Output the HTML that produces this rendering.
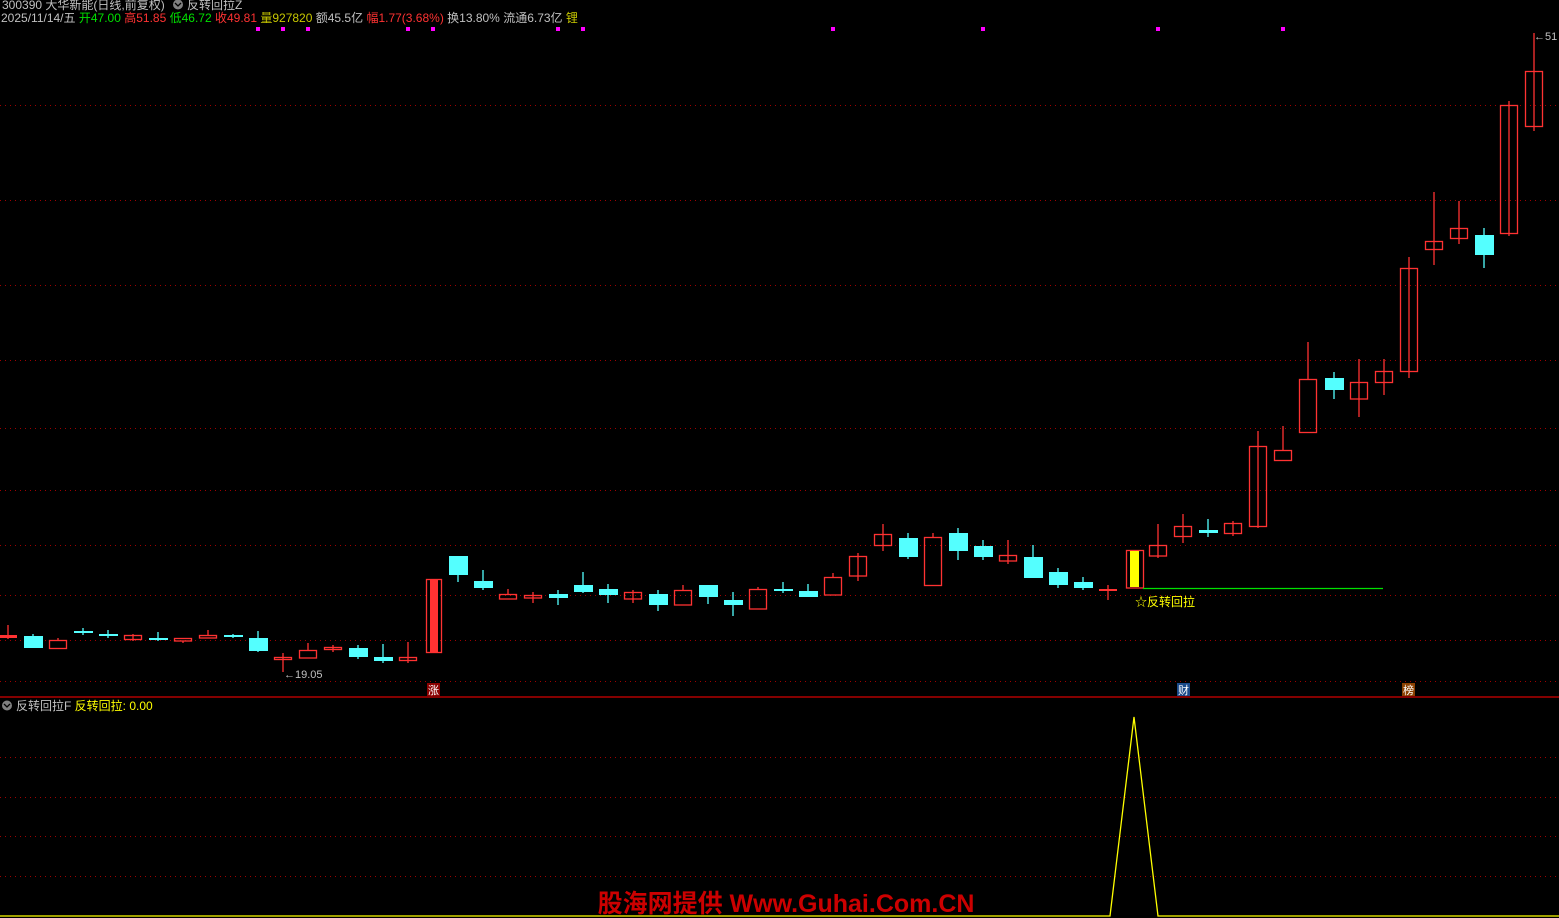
<!DOCTYPE html>
<html><head><meta charset="utf-8"><style>
html,body{margin:0;padding:0;background:#000;width:1559px;height:918px;overflow:hidden}
svg{display:block}
text{font-family:"Liberation Sans","Noto Sans CJK SC",sans-serif}
</style></head><body>
<svg width="1559" height="918" viewBox="0 0 1559 918" xmlns="http://www.w3.org/2000/svg">
<rect width="1559" height="918" fill="#000"/>
<g stroke="#a00000" stroke-width="1" stroke-dasharray="1 4">
<line x1="0" y1="105.5" x2="1559" y2="105.5"/><line x1="0" y1="200.5" x2="1559" y2="200.5"/>
<line x1="0" y1="285.5" x2="1559" y2="285.5"/><line x1="0" y1="360.5" x2="1559" y2="360.5"/>
<line x1="0" y1="428.5" x2="1559" y2="428.5"/><line x1="0" y1="490.5" x2="1559" y2="490.5"/>
<line x1="0" y1="545.5" x2="1559" y2="545.5"/><line x1="0" y1="595.5" x2="1559" y2="595.5"/>
<line x1="0" y1="640.5" x2="1559" y2="640.5"/><line x1="0" y1="681.5" x2="1559" y2="681.5"/>
<line x1="0" y1="757.5" x2="1559" y2="757.5"/><line x1="0" y1="797.5" x2="1559" y2="797.5"/>
<line x1="0" y1="836.5" x2="1559" y2="836.5"/><line x1="0" y1="876.5" x2="1559" y2="876.5"/>
</g>
<line x1="0" y1="697" x2="1559" y2="697" stroke="#b00000" stroke-width="1.5"/>
<g fill="#ff00ff">
<rect x="256" y="27" width="4" height="4"/><rect x="281" y="27" width="4" height="4"/><rect x="306" y="27" width="4" height="4"/>
<rect x="406" y="27" width="4" height="4"/><rect x="431" y="27" width="4" height="4"/><rect x="556" y="27" width="4" height="4"/>
<rect x="581" y="27" width="4" height="4"/><rect x="831" y="27" width="4" height="4"/><rect x="981" y="27" width="4" height="4"/>
<rect x="1156" y="27" width="4" height="4"/><rect x="1281" y="27" width="4" height="4"/>
</g>
<g stroke="#ff3232" stroke-width="1.3" fill="none">
<line x1="8" y1="625" x2="8" y2="639"/>
<line x1="58" y1="638" x2="58" y2="640"/><rect x="49.5" y="640.5" width="17" height="8"/>
<line x1="133" y1="634" x2="133" y2="641"/><rect x="124.5" y="635.5" width="17" height="4"/>
<line x1="183" y1="641" x2="183" y2="643"/><rect x="174.5" y="638.5" width="17" height="2.5"/>
<line x1="208" y1="630" x2="208" y2="635"/><rect x="199.5" y="635.5" width="17" height="2.5"/>
<line x1="283" y1="653" x2="283" y2="672"/><rect x="274.5" y="657.5" width="17" height="2"/>
<line x1="308" y1="643" x2="308" y2="650"/><rect x="299.5" y="650.5" width="17" height="7.5"/>
<line x1="333" y1="645" x2="333" y2="652"/><rect x="324.5" y="647.5" width="17" height="2"/>
<line x1="408" y1="642" x2="408" y2="663"/><rect x="399.5" y="657.5" width="17" height="3"/>
<rect x="426.5" y="579.5" width="15" height="73"/>
<line x1="508" y1="589" x2="508" y2="594"/><rect x="499.5" y="594.5" width="17" height="4.5"/>
<line x1="533" y1="592" x2="533" y2="603"/><rect x="524.5" y="595.5" width="17" height="2.5"/>
<line x1="633" y1="590" x2="633" y2="603"/><rect x="624.5" y="592.5" width="17" height="6.5"/>
<line x1="683" y1="585" x2="683" y2="590"/><rect x="674.5" y="590.5" width="17" height="14.5"/>
<line x1="758" y1="587" x2="758" y2="589"/><rect x="749.5" y="589.5" width="17" height="19.5"/>
<line x1="833" y1="573" x2="833" y2="577"/><rect x="824.5" y="577.5" width="17" height="17.5"/>
<line x1="858" y1="553" x2="858" y2="581"/><rect x="849.5" y="556.5" width="17" height="19.5"/>
<line x1="883" y1="524" x2="883" y2="551"/><rect x="874.5" y="534.5" width="17" height="11"/>
<line x1="933" y1="533" x2="933" y2="537"/><rect x="924.5" y="537.5" width="17" height="48"/>
<line x1="1008" y1="540" x2="1008" y2="564"/><rect x="999.5" y="555.5" width="17" height="5.5"/>
<line x1="1108" y1="585" x2="1108" y2="600"/>
<rect x="1126.5" y="550.5" width="17" height="37.5"/>
<line x1="1158" y1="524" x2="1158" y2="558"/><rect x="1149.5" y="545.5" width="17" height="10.5"/>
<line x1="1183" y1="514" x2="1183" y2="543"/><rect x="1174.5" y="526.5" width="17" height="10"/>
<line x1="1233" y1="521" x2="1233" y2="536"/><rect x="1224.5" y="523.5" width="17" height="10"/>
<line x1="1258" y1="431" x2="1258" y2="528"/><rect x="1249.5" y="446.5" width="17" height="80"/>
<line x1="1283" y1="426" x2="1283" y2="450"/><rect x="1274.5" y="450.5" width="17" height="10"/>
<line x1="1308" y1="342" x2="1308" y2="379"/><rect x="1299.5" y="379.5" width="17" height="53"/>
<line x1="1359" y1="359" x2="1359" y2="417"/><rect x="1350.5" y="382.5" width="17" height="16.5"/>
<line x1="1384" y1="359" x2="1384" y2="395"/><rect x="1375.5" y="371.5" width="17" height="11"/>
<line x1="1409" y1="257" x2="1409" y2="378"/><rect x="1400.5" y="268.5" width="17" height="103"/>
<line x1="1434" y1="192" x2="1434" y2="265"/><rect x="1425.5" y="241.5" width="17" height="8"/>
<line x1="1459" y1="201" x2="1459" y2="244"/><rect x="1450.5" y="228.5" width="17" height="10"/>
<line x1="1509" y1="101" x2="1509" y2="236"/><rect x="1500.5" y="105.5" width="17" height="128"/>
<line x1="1534" y1="33" x2="1534" y2="131"/><rect x="1525.5" y="71.5" width="17" height="55"/>
</g>
<g fill="#ff3232">
<rect x="0" y="635" width="17" height="3"/>
<rect x="430" y="580" width="8" height="72"/>
<rect x="1099" y="589" width="18" height="2"/>
</g>
<rect x="1130" y="551" width="9" height="36" fill="#ffff00"/>
<g stroke="#54ffff" stroke-width="1.3">
<line x1="33" y1="634" x2="33" y2="648"/><line x1="83" y1="628" x2="83" y2="635"/>
<line x1="108" y1="630" x2="108" y2="638"/><line x1="158" y1="632" x2="158" y2="641"/>
<line x1="233" y1="634" x2="233" y2="638"/><line x1="258" y1="631" x2="258" y2="652"/>
<line x1="358" y1="645" x2="358" y2="659"/><line x1="383" y1="644" x2="383" y2="663"/>
<line x1="458" y1="556" x2="458" y2="582"/><line x1="483" y1="570" x2="483" y2="590"/>
<line x1="558" y1="590" x2="558" y2="605"/><line x1="583" y1="572" x2="583" y2="593"/>
<line x1="608" y1="584" x2="608" y2="603"/><line x1="658" y1="590" x2="658" y2="611"/>
<line x1="708" y1="585" x2="708" y2="604"/><line x1="733" y1="592" x2="733" y2="616"/>
<line x1="783" y1="582" x2="783" y2="593"/><line x1="808" y1="584" x2="808" y2="597"/>
<line x1="908" y1="533" x2="908" y2="559"/><line x1="958" y1="528" x2="958" y2="560"/>
<line x1="983" y1="540" x2="983" y2="560"/><line x1="1033" y1="545" x2="1033" y2="578"/>
<line x1="1058" y1="568" x2="1058" y2="588"/><line x1="1083" y1="577" x2="1083" y2="590"/>
<line x1="1208" y1="519" x2="1208" y2="537"/><line x1="1334" y1="372" x2="1334" y2="399"/>
<line x1="1484" y1="228" x2="1484" y2="268"/>
</g>
<g fill="#54ffff">
<rect x="24" y="636" width="19" height="12"/><rect x="74" y="631" width="19" height="2"/>
<rect x="99" y="634" width="19" height="2"/><rect x="149" y="638" width="19" height="2"/>
<rect x="224" y="635" width="19" height="2"/><rect x="249" y="638" width="19" height="13"/>
<rect x="349" y="648" width="19" height="9"/><rect x="374" y="657" width="19" height="4"/>
<rect x="449" y="556" width="19" height="19"/><rect x="474" y="581" width="19" height="7"/>
<rect x="549" y="594" width="19" height="4"/><rect x="574" y="585" width="19" height="7"/>
<rect x="599" y="589" width="19" height="6"/><rect x="649" y="594" width="19" height="11"/>
<rect x="699" y="585" width="19" height="12"/><rect x="724" y="600" width="19" height="5"/>
<rect x="774" y="589" width="19" height="2"/><rect x="799" y="591" width="19" height="6"/>
<rect x="899" y="538" width="19" height="19"/><rect x="949" y="533" width="19" height="18"/>
<rect x="974" y="546" width="19" height="11"/><rect x="1024" y="557" width="19" height="21"/>
<rect x="1049" y="572" width="19" height="13"/><rect x="1074" y="582" width="19" height="6"/>
<rect x="1199" y="530" width="19" height="3"/><rect x="1325" y="378" width="19" height="12"/>
<rect x="1475" y="235" width="19" height="20"/>
</g>
<line x1="1143" y1="588.5" x2="1383" y2="588.5" stroke="#00e000" stroke-width="1.3"/>
<text x="1135" y="606" font-size="12" fill="#ffff00">☆反转回拉</text>
<text x="284" y="678" font-size="11" fill="#c0c0c0">←19.05</text>
<text x="1534" y="40" font-size="11" fill="#c0c0c0">←51</text>
<rect x="427" y="683" width="13" height="13" fill="#8b0000"/><text x="428" y="694" font-size="11" fill="#fff">涨</text>
<rect x="1177" y="683" width="13" height="13" fill="#1a4a8a"/><text x="1178" y="694" font-size="11" fill="#fff">财</text>
<rect x="1402" y="683" width="13" height="13" fill="#8b4000"/><text x="1403" y="694" font-size="11" fill="#fff">榜</text>
<text x="2" y="9" font-size="12" fill="#c0c0c0">300390 大华新能(日线,前复权)</text>
<circle cx="178" cy="4.5" r="5" fill="#808080"/><path d="M175 3 L178 6 L181 3" stroke="#000" stroke-width="1.3" fill="none"/>
<text x="187" y="9" font-size="12" fill="#c0c0c0">反转回拉Z</text>
<text y="22" font-size="12"><tspan x="1" fill="#c0c0c0">2025/11/14/五 </tspan><tspan fill="#00e000">开47.00 </tspan><tspan fill="#ff3232">高51.85 </tspan><tspan fill="#00e000">低46.72 </tspan><tspan fill="#ff3232">收49.81 </tspan><tspan fill="#c8c800">量927820 </tspan><tspan fill="#c0c0c0">额45.5亿 </tspan><tspan fill="#ff3232">幅1.77(3.68%) </tspan><tspan fill="#c0c0c0">换13.80% 流通6.73亿 </tspan><tspan fill="#c8c800">锂</tspan></text>
<circle cx="7" cy="705.5" r="5" fill="#808080"/><path d="M4 704 L7 707 L10 704" stroke="#000" stroke-width="1.3" fill="none"/>
<text x="16" y="710" font-size="12"><tspan fill="#c0c0c0">反转回拉F  </tspan><tspan fill="#ffff00">反转回拉: 0.00</tspan></text>
<polyline points="0,916 1110,916 1134,717 1158,916 1559,916" stroke="#ffff00" stroke-width="1.3" fill="none"/>
<text x="786" y="912" font-size="25" font-weight="bold" fill="#cc0000" text-anchor="middle">股海网提供 Www.Guhai.Com.CN</text>
</svg>
</body></html>
